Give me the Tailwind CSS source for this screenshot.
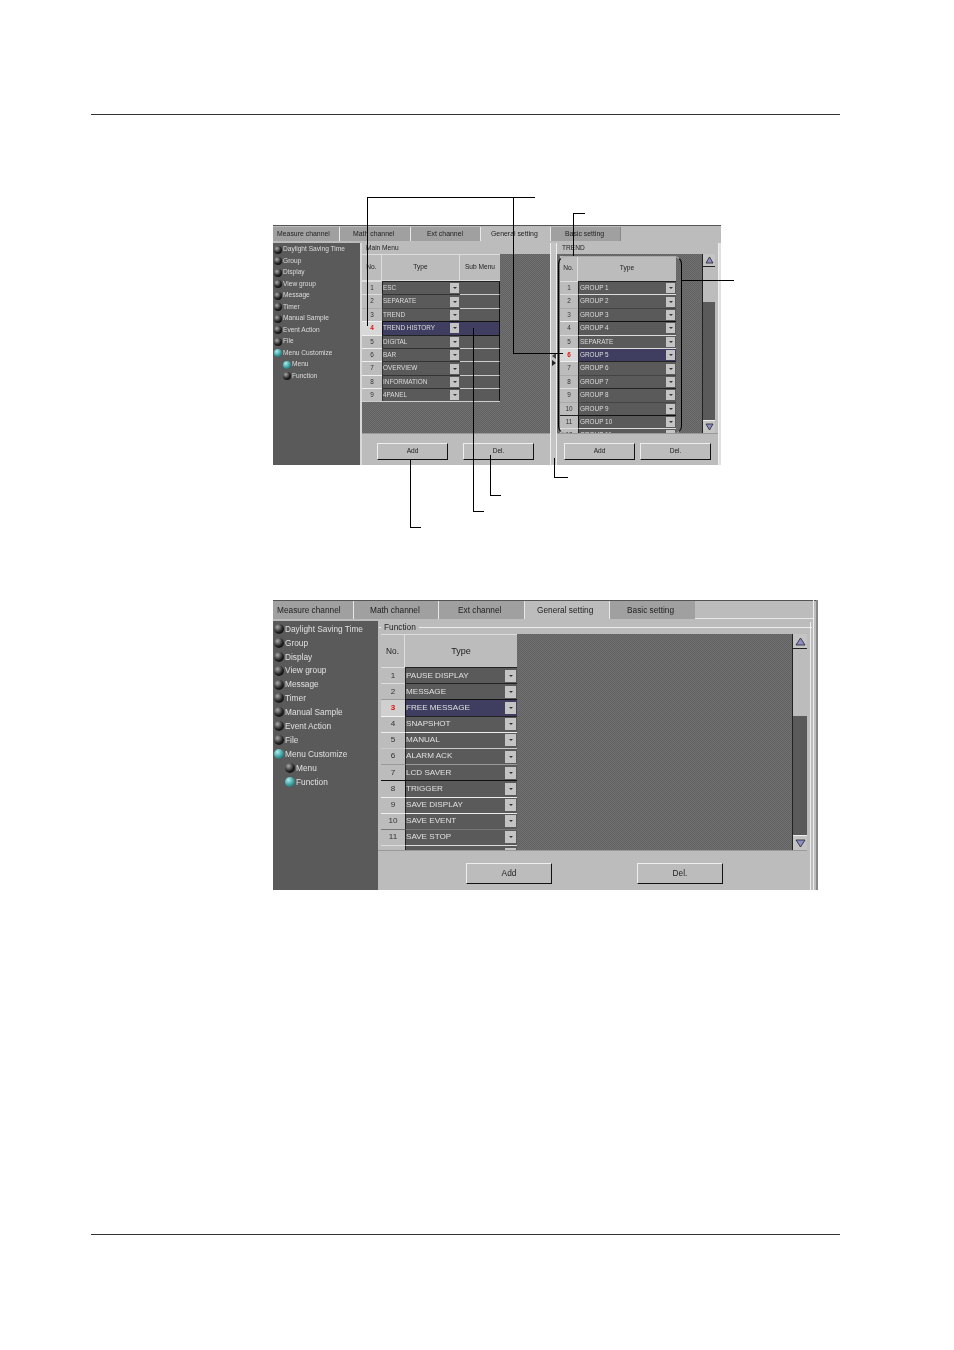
<!DOCTYPE html>
<html><head><meta charset="utf-8"><title>Menu Customize</title>
<script src="https://cdn.jsdelivr.net/npm/@tailwindcss/browser@4"></script>
</head>
<body class="bg-white">
<div class="relative w-[954px] h-[1350px] overflow-hidden bg-white font-['Liberation_Sans',Arial,sans-serif]">
  <div class="absolute left-[91px] top-[114px] w-[749px] h-px bg-[#333]"></div>
  <div class="absolute left-[91px] top-[1234px] w-[749px] h-px bg-[#333]"></div>

  <div class="pt-[225px] pl-[273px]">
    <!-- PANEL 1 -->
    <div class="w-[448px] h-[240px] flex flex-col bg-[#bcbcbc] border-t border-[#555] text-[6.6px] leading-none text-[#222] blur-[0.3px]">
      <div class="flex h-[15px] shrink-0 text-[6.9px] pt-px">
        <div class="w-[67px] bg-[#a0a0a0] border-r border-[#e8e8e8] flex items-center pl-[4px]">Measure channel</div>
        <div class="w-[71px] bg-[#a0a0a0] border-r border-[#e8e8e8] flex items-center pl-[13px]">Math channel</div>
        <div class="w-[70px] bg-[#a0a0a0] border-r border-[#e8e8e8] flex items-center pl-[16px]">Ext channel</div>
        <div class="w-[70px] bg-[#bcbcbc] border-r border-[#e8e8e8] flex items-center pl-[10px]">General setting</div>
        <div class="w-[70px] bg-[#a0a0a0] border-r border-[#888] flex items-center pl-[14px]">Basic setting</div>
      </div>
      <div class="flex flex-1 min-h-0 pt-[2px]">
        <div class="w-[87px] bg-[#5a5a5a] text-[#dcdcdc] flex flex-col pt-[1px] pl-[1px] shrink-0">
          <div class="flex items-center gap-[1px] h-[11.5px]"><span class="w-[8px] h-[8px] rounded-full bg-[radial-gradient(circle_at_35%_30%,#aaa,#222_55%,#000)]"></span>Daylight Saving Time</div>
          <div class="flex items-center gap-[1px] h-[11.5px]"><span class="w-[8px] h-[8px] rounded-full bg-[radial-gradient(circle_at_35%_30%,#aaa,#222_55%,#000)]"></span>Group</div>
          <div class="flex items-center gap-[1px] h-[11.5px]"><span class="w-[8px] h-[8px] rounded-full bg-[radial-gradient(circle_at_35%_30%,#aaa,#222_55%,#000)]"></span>Display</div>
          <div class="flex items-center gap-[1px] h-[11.5px]"><span class="w-[8px] h-[8px] rounded-full bg-[radial-gradient(circle_at_35%_30%,#aaa,#222_55%,#000)]"></span>View group</div>
          <div class="flex items-center gap-[1px] h-[11.5px]"><span class="w-[8px] h-[8px] rounded-full bg-[radial-gradient(circle_at_35%_30%,#aaa,#222_55%,#000)]"></span>Message</div>
          <div class="flex items-center gap-[1px] h-[11.5px]"><span class="w-[8px] h-[8px] rounded-full bg-[radial-gradient(circle_at_35%_30%,#aaa,#222_55%,#000)]"></span>Timer</div>
          <div class="flex items-center gap-[1px] h-[11.5px]"><span class="w-[8px] h-[8px] rounded-full bg-[radial-gradient(circle_at_35%_30%,#aaa,#222_55%,#000)]"></span>Manual Sample</div>
          <div class="flex items-center gap-[1px] h-[11.5px]"><span class="w-[8px] h-[8px] rounded-full bg-[radial-gradient(circle_at_35%_30%,#aaa,#222_55%,#000)]"></span>Event Action</div>
          <div class="flex items-center gap-[1px] h-[11.5px]"><span class="w-[8px] h-[8px] rounded-full bg-[radial-gradient(circle_at_35%_30%,#aaa,#222_55%,#000)]"></span>File</div>
          <div class="flex items-center gap-[1px] h-[11.5px]"><span class="w-[8px] h-[8px] rounded-full bg-[radial-gradient(circle_at_35%_30%,#aee,#3a9a9a_55%,#145)]"></span>Menu Customize</div>
          <div class="flex items-center gap-[1px] h-[11.5px] pl-[9px]"><span class="w-[8px] h-[8px] rounded-full bg-[radial-gradient(circle_at_35%_30%,#aee,#3a9a9a_55%,#145)]"></span>Menu</div>
          <div class="flex items-center gap-[1px] h-[11.5px] pl-[9px]"><span class="w-[8px] h-[8px] rounded-full bg-[radial-gradient(circle_at_35%_30%,#aaa,#222_55%,#000)]"></span>Function</div>
        </div>
        <div class="w-[2px] bg-[#d8d8d8] shrink-0"></div>
        <!-- left menu column -->
        <div class="w-[188px] flex flex-col shrink-0">
          <div class="h-[11px] pl-[4px] flex items-center">Main Menu</div>
          <div class="h-[179px] flex bg-[repeating-conic-gradient(#626262_0_25%,#707070_0_50%)] bg-[length:2px_2px] overflow-hidden">
            <div class="w-[138px] flex flex-col shrink-0 bg-[#bcbcbc]">
              <div class="flex h-[27px] shrink-0 border-y border-[#ddd]">
                <div class="w-[20px] flex items-center justify-center border-r border-[#ddd]">No.</div>
                <div class="w-[78px] flex items-center justify-center border-r border-[#ddd]">Type</div>
                <div class="w-[40px] flex items-center justify-center">Sub Menu</div>
              </div>
              <div class="flex h-[13.4px] text-[#ddd] text-[6.4px]"><div class="w-[20px] bg-[#bcbcbc] border-t border-[#ddd] text-[#333] flex items-center justify-center">1</div><div class="w-[78px] bg-[#5a5a5a] border-t border-l border-[#222] flex items-center justify-between">ESC<span class="w-[9px] h-[10px] mr-[1px] bg-[#c4c4c4] flex items-center justify-center"><span class="border-x-[2px] border-t-[2px] border-x-transparent border-t-[#333]"></span></span></div><div class="w-[40px] bg-[#5a5a5a] border-t border-t-[#222] border-r border-r-[#111]"></div></div>
              <div class="flex h-[13.4px] text-[#ddd] text-[6.4px]"><div class="w-[20px] bg-[#bcbcbc] border-t border-[#ddd] text-[#333] flex items-center justify-center">2</div><div class="w-[78px] bg-[#5a5a5a] border-t border-l border-[#333] flex items-center justify-between">SEPARATE<span class="w-[9px] h-[10px] mr-[1px] bg-[#c4c4c4] flex items-center justify-center"><span class="border-x-[2px] border-t-[2px] border-x-transparent border-t-[#333]"></span></span></div><div class="w-[40px] bg-[#5a5a5a] border-t border-t-[#ccc] border-r border-r-[#111]"></div></div>
              <div class="flex h-[13.4px] text-[#ddd] text-[6.4px]"><div class="w-[20px] bg-[#bcbcbc] border-t border-[#aaa] text-[#333] flex items-center justify-center">3</div><div class="w-[78px] bg-[#5a5a5a] border-t border-l border-[#444] flex items-center justify-between">TREND<span class="w-[9px] h-[10px] mr-[1px] bg-[#c4c4c4] flex items-center justify-center"><span class="border-x-[2px] border-t-[2px] border-x-transparent border-t-[#333]"></span></span></div><div class="w-[40px] bg-[#5a5a5a] border-t border-t-[#ccc] border-r border-r-[#111]"></div></div>
              <div class="flex h-[13.4px] text-[#ddd] text-[6.4px]"><div class="w-[20px] bg-[#d8d8d8] border-t border-[#eee] text-[#e01010] font-bold flex items-center justify-center">4</div><div class="w-[78px] bg-[#3f3e60] border-t border-l border-[#111] flex items-center justify-between">TREND HISTORY<span class="w-[9px] h-[10px] mr-[1px] bg-[#c4c4c4] flex items-center justify-center"><span class="border-x-[2px] border-t-[2px] border-x-transparent border-t-[#333]"></span></span></div><div class="w-[40px] bg-[#3f3e60] border-t border-t-[#111] border-r border-r-[#111]"></div></div>
              <div class="flex h-[13.4px] text-[#ddd] text-[6.4px]"><div class="w-[20px] bg-[#bcbcbc] border-t border-[#eee] text-[#333] flex items-center justify-center">5</div><div class="w-[78px] bg-[#5a5a5a] border-t border-l border-[#222] flex items-center justify-between">DIGITAL<span class="w-[9px] h-[10px] mr-[1px] bg-[#c4c4c4] flex items-center justify-center"><span class="border-x-[2px] border-t-[2px] border-x-transparent border-t-[#333]"></span></span></div><div class="w-[40px] bg-[#5a5a5a] border-t border-t-[#111] border-r border-r-[#111]"></div></div>
              <div class="flex h-[13.4px] text-[#ddd] text-[6.4px]"><div class="w-[20px] bg-[#bcbcbc] border-t border-[#eee] text-[#333] flex items-center justify-center">6</div><div class="w-[78px] bg-[#5a5a5a] border-t border-l border-[#333] flex items-center justify-between">BAR<span class="w-[9px] h-[10px] mr-[1px] bg-[#c4c4c4] flex items-center justify-center"><span class="border-x-[2px] border-t-[2px] border-x-transparent border-t-[#333]"></span></span></div><div class="w-[40px] bg-[#5a5a5a] border-t border-t-[#ccc] border-r border-r-[#111]"></div></div>
              <div class="flex h-[13.4px] text-[#ddd] text-[6.4px]"><div class="w-[20px] bg-[#bcbcbc] border-t border-[#eee] text-[#333] flex items-center justify-center">7</div><div class="w-[78px] bg-[#5a5a5a] border-t border-l border-[#333] flex items-center justify-between">OVERVIEW<span class="w-[9px] h-[10px] mr-[1px] bg-[#c4c4c4] flex items-center justify-center"><span class="border-x-[2px] border-t-[2px] border-x-transparent border-t-[#333]"></span></span></div><div class="w-[40px] bg-[#5a5a5a] border-t border-t-[#ccc] border-r border-r-[#111]"></div></div>
              <div class="flex h-[13.4px] text-[#ddd] text-[6.4px]"><div class="w-[20px] bg-[#bcbcbc] border-t border-[#eee] text-[#333] flex items-center justify-center">8</div><div class="w-[78px] bg-[#5a5a5a] border-t border-l border-[#333] flex items-center justify-between">INFORMATION<span class="w-[9px] h-[10px] mr-[1px] bg-[#c4c4c4] flex items-center justify-center"><span class="border-x-[2px] border-t-[2px] border-x-transparent border-t-[#333]"></span></span></div><div class="w-[40px] bg-[#5a5a5a] border-t border-t-[#ccc] border-r border-r-[#111]"></div></div>
              <div class="flex h-[14px] text-[#ddd] text-[6.4px] border-b border-[#ccc]"><div class="w-[20px] bg-[#bcbcbc] border-t border-[#eee] text-[#333] flex items-center justify-center">9</div><div class="w-[78px] bg-[#5a5a5a] border-t border-l border-[#333] flex items-center justify-between">4PANEL<span class="w-[9px] h-[10px] mr-[1px] bg-[#c4c4c4] flex items-center justify-center"><span class="border-x-[2px] border-t-[2px] border-x-transparent border-t-[#333]"></span></span></div><div class="w-[40px] bg-[#5a5a5a] border-t border-t-[#ccc] border-r border-r-[#111]"></div></div>
              <div class="flex-1 bg-[repeating-conic-gradient(#626262_0_25%,#707070_0_50%)] bg-[length:2px_2px]"></div>
            </div>
          </div>
          <div class="flex-1 border-t border-[#999] flex gap-[15px] pl-[15px] pt-[9px]">
            <div class="w-[71px] h-[17px] bg-[#bcbcbc] border border-t-[#eee] border-l-[#eee] border-r-[#111] border-b-[#111] flex items-center justify-center">Add</div>
            <div class="w-[71px] h-[17px] bg-[#bcbcbc] border border-t-[#eee] border-l-[#eee] border-r-[#111] border-b-[#111] flex items-center justify-center">Del.</div>
          </div>
        </div>
        <!-- divider -->
        <div class="w-[7px] shrink-0 bg-[#c4c4c4] border-x border-x-[#eee] relative">
          <span class="absolute left-[1px] top-[110px] border-y-[3px] border-r-[4px] border-y-transparent border-r-[#444]"></span>
          <span class="absolute left-[1px] top-[117px] border-y-[3px] border-l-[4px] border-y-transparent border-l-[#222]"></span>
        </div>
        <!-- right column -->
        <div class="w-[161px] flex flex-col shrink-0">
          <div class="h-[11px] pl-[5px] flex items-center">TREND</div>
          <div class="h-[179px] flex bg-[repeating-conic-gradient(#626262_0_25%,#707070_0_50%)] bg-[length:2px_2px] overflow-hidden">
            <div class="w-[145px] pl-[3px] pt-[2px] shrink-0">
              <div class="w-[116px] flex flex-col bg-[#bcbcbc] h-[177px] overflow-hidden">
                <div class="flex h-[25px] shrink-0">
                  <div class="w-[18px] flex items-center justify-center border-r border-[#ddd]">No.</div>
                  <div class="w-[98px] flex items-center justify-center">Type</div>
                </div>
                <div class="flex h-[13.4px] shrink-0 text-[#ddd] text-[6.4px]"><div class="w-[18px] bg-[#bcbcbc] border-t border-[#ddd] text-[#333] flex items-center justify-center">1</div><div class="w-[98px] bg-[#5a5a5a] border-t border-l border-[#222] flex items-center justify-between pl-px">GROUP 1<span class="w-[9px] h-[10px] mr-[1px] bg-[#c4c4c4] flex items-center justify-center"><span class="border-x-[2px] border-t-[2px] border-x-transparent border-t-[#333]"></span></span></div></div>
                <div class="flex h-[13.4px] shrink-0 text-[#ddd] text-[6.4px]"><div class="w-[18px] bg-[#bcbcbc] border-t border-[#ddd] text-[#333] flex items-center justify-center">2</div><div class="w-[98px] bg-[#5a5a5a] border-t border-l border-[#ddd] border-l-[#222] flex items-center justify-between pl-px">GROUP 2<span class="w-[9px] h-[10px] mr-[1px] bg-[#c4c4c4] flex items-center justify-center"><span class="border-x-[2px] border-t-[2px] border-x-transparent border-t-[#333]"></span></span></div></div>
                <div class="flex h-[13.4px] shrink-0 text-[#ddd] text-[6.4px]"><div class="w-[18px] bg-[#bcbcbc] border-t border-[#aaa] text-[#444] flex items-center justify-center">3</div><div class="w-[98px] bg-[#5a5a5a] border-t border-l border-[#444] border-l-[#222] flex items-center justify-between pl-px">GROUP 3<span class="w-[9px] h-[10px] mr-[1px] bg-[#c4c4c4] flex items-center justify-center"><span class="border-x-[2px] border-t-[2px] border-x-transparent border-t-[#333]"></span></span></div></div>
                <div class="flex h-[13.4px] shrink-0 text-[#ddd] text-[6.4px]"><div class="w-[18px] bg-[#bcbcbc] border-t border-[#eee] text-[#333] flex items-center justify-center">4</div><div class="w-[98px] bg-[#5a5a5a] border-t border-l border-[#111] flex items-center justify-between pl-px">GROUP 4<span class="w-[9px] h-[10px] mr-[1px] bg-[#c4c4c4] flex items-center justify-center"><span class="border-x-[2px] border-t-[2px] border-x-transparent border-t-[#333]"></span></span></div></div>
                <div class="flex h-[13.4px] shrink-0 text-[#ddd] text-[6.4px]"><div class="w-[18px] bg-[#bcbcbc] border-t border-[#ddd] text-[#333] flex items-center justify-center">5</div><div class="w-[98px] bg-[#5a5a5a] border-t border-l border-[#ddd] border-l-[#222] flex items-center justify-between pl-px">SEPARATE<span class="w-[9px] h-[10px] mr-[1px] bg-[#c4c4c4] flex items-center justify-center"><span class="border-x-[2px] border-t-[2px] border-x-transparent border-t-[#333]"></span></span></div></div>
                <div class="flex h-[13.4px] shrink-0 text-[#ddd] text-[6.4px]"><div class="w-[18px] bg-[#d8d8d8] border-t border-[#eee] text-[#e01010] font-bold flex items-center justify-center">6</div><div class="w-[98px] bg-[#3f3e60] border-t border-l border-[#ddd] border-l-[#222] flex items-center justify-between pl-px">GROUP 5<span class="w-[9px] h-[10px] mr-[1px] bg-[#c4c4c4] flex items-center justify-center"><span class="border-x-[2px] border-t-[2px] border-x-transparent border-t-[#333]"></span></span></div></div>
                <div class="flex h-[13.4px] shrink-0 text-[#ddd] text-[6.4px]"><div class="w-[18px] bg-[#bcbcbc] border-t border-[#eee] text-[#333] flex items-center justify-center">7</div><div class="w-[98px] bg-[#5a5a5a] border-t border-l border-[#222] flex items-center justify-between pl-px">GROUP 6<span class="w-[9px] h-[10px] mr-[1px] bg-[#c4c4c4] flex items-center justify-center"><span class="border-x-[2px] border-t-[2px] border-x-transparent border-t-[#333]"></span></span></div></div>
                <div class="flex h-[13.4px] shrink-0 text-[#ddd] text-[6.4px]"><div class="w-[18px] bg-[#bcbcbc] border-t border-[#aaa] text-[#333] flex items-center justify-center">8</div><div class="w-[98px] bg-[#5a5a5a] border-t border-l border-[#444] border-l-[#222] flex items-center justify-between pl-px">GROUP 7<span class="w-[9px] h-[10px] mr-[1px] bg-[#c4c4c4] flex items-center justify-center"><span class="border-x-[2px] border-t-[2px] border-x-transparent border-t-[#333]"></span></span></div></div>
                <div class="flex h-[13.4px] shrink-0 text-[#ddd] text-[6.4px]"><div class="w-[18px] bg-[#bcbcbc] border-t border-[#ddd] text-[#333] flex items-center justify-center">9</div><div class="w-[98px] bg-[#5a5a5a] border-t border-l border-[#222] flex items-center justify-between pl-px">GROUP 8<span class="w-[9px] h-[10px] mr-[1px] bg-[#c4c4c4] flex items-center justify-center"><span class="border-x-[2px] border-t-[2px] border-x-transparent border-t-[#333]"></span></span></div></div>
                <div class="flex h-[13.4px] shrink-0 text-[#ddd] text-[6.4px]"><div class="w-[18px] bg-[#bcbcbc] border-t border-[#aaa] text-[#333] flex items-center justify-center">10</div><div class="w-[98px] bg-[#5a5a5a] border-t border-l border-[#444] border-l-[#222] flex items-center justify-between pl-px">GROUP 9<span class="w-[9px] h-[10px] mr-[1px] bg-[#c4c4c4] flex items-center justify-center"><span class="border-x-[2px] border-t-[2px] border-x-transparent border-t-[#333]"></span></span></div></div>
                <div class="flex h-[13.4px] shrink-0 text-[#ddd] text-[6.4px]"><div class="w-[18px] bg-[#bcbcbc] border-t border-[#222] text-[#333] flex items-center justify-center">11</div><div class="w-[98px] bg-[#5a5a5a] border-t border-l border-[#111] flex items-center justify-between pl-px">GROUP 10<span class="w-[9px] h-[10px] mr-[1px] bg-[#c4c4c4] flex items-center justify-center"><span class="border-x-[2px] border-t-[2px] border-x-transparent border-t-[#333]"></span></span></div></div>
                <div class="flex h-[13.4px] shrink-0 text-[#ddd] text-[6.4px]"><div class="w-[18px] bg-[#bcbcbc] border-t border-[#ddd] text-[#333] flex items-center justify-center">12</div><div class="w-[98px] bg-[#5a5a5a] border-t border-l border-[#ddd] border-l-[#222] flex items-center justify-between pl-px">GROUP 11<span class="w-[9px] h-[10px] mr-[1px] bg-[#c4c4c4] flex items-center justify-center"><span class="border-x-[2px] border-t-[2px] border-x-transparent border-t-[#333]"></span></span></div></div>
              </div>
            </div>
            <div class="w-[13px] flex flex-col shrink-0 bg-[#5a5a5a] border-l border-[#222]">
              <div class="h-[13px] bg-[#c4c4c4] border-b border-[#222] flex items-center justify-center"><svg width="9" height="8" viewBox="0 0 9 8"><path d="M4.5 1 L8 7 H1Z" fill="#8d8dc8" stroke="#222" stroke-width="0.8"/></svg></div>
              <div class="h-[35px] bg-[#bcbcbc]"></div>
              <div class="flex-1"></div>
              <div class="h-[13px] bg-[#c4c4c4] border-t border-[#eee] flex items-center justify-center"><svg width="9" height="8" viewBox="0 0 9 8"><path d="M4.5 7 L8 1 H1Z" fill="#8d8dc8" stroke="#222" stroke-width="0.8"/></svg></div>
            </div>
            <div class="flex-1 bg-[#bcbcbc]"></div>
          </div>
          <div class="flex-1 border-t border-[#999] flex gap-[5px] pl-[7px] pt-[9px]">
            <div class="w-[71px] h-[17px] bg-[#bcbcbc] border border-t-[#eee] border-l-[#eee] border-r-[#111] border-b-[#111] flex items-center justify-center">Add</div>
            <div class="w-[71px] h-[17px] bg-[#bcbcbc] border border-t-[#eee] border-l-[#eee] border-r-[#111] border-b-[#111] flex items-center justify-center">Del.</div>
          </div>
        </div>
        <div class="flex-1 border-l border-[#eee] border-r-2 border-r-[#e0e0e0]"></div>
      </div>
    </div>

    <!-- PANEL 2 -->
    <div class="mt-[135px] w-[545px] h-[290px] flex flex-col bg-[#bcbcbc] border-t border-[#555] text-[8.3px] leading-none text-[#222] blur-[0.3px]">
      <div class="flex h-[18px] shrink-0">
        <div class="w-[81px] bg-[#a0a0a0] border-r border-[#e8e8e8] flex items-center pl-[4px]">Measure channel</div>
        <div class="w-[85px] bg-[#a0a0a0] border-r border-[#e8e8e8] flex items-center pl-[16px]">Math channel</div>
        <div class="w-[86px] bg-[#a0a0a0] border-r border-[#e8e8e8] flex items-center pl-[19px]">Ext channel</div>
        <div class="w-[85px] bg-[#bcbcbc] border-r border-[#e8e8e8] flex items-center pl-[12px]">General setting</div>
        <div class="w-[85px] bg-[#a0a0a0] flex items-center pl-[17px]">Basic setting</div>
        <div class="flex-1 border-b border-[#e8e8e8] mr-[5px]"></div>
      </div>
      <div class="flex flex-1 min-h-0 pt-[2px]">
        <div class="w-[105px] bg-[#5a5a5a] text-[#e0e0e0] flex flex-col pt-[1px] pl-[1px] shrink-0">
          <div class="flex items-center gap-[1px] h-[13.9px]"><span class="w-[10px] h-[10px] rounded-full bg-[radial-gradient(circle_at_35%_30%,#aaa,#222_55%,#000)]"></span>Daylight Saving Time</div>
          <div class="flex items-center gap-[1px] h-[13.9px]"><span class="w-[10px] h-[10px] rounded-full bg-[radial-gradient(circle_at_35%_30%,#aaa,#222_55%,#000)]"></span>Group</div>
          <div class="flex items-center gap-[1px] h-[13.9px]"><span class="w-[10px] h-[10px] rounded-full bg-[radial-gradient(circle_at_35%_30%,#aaa,#222_55%,#000)]"></span>Display</div>
          <div class="flex items-center gap-[1px] h-[13.9px]"><span class="w-[10px] h-[10px] rounded-full bg-[radial-gradient(circle_at_35%_30%,#aaa,#222_55%,#000)]"></span>View group</div>
          <div class="flex items-center gap-[1px] h-[13.9px]"><span class="w-[10px] h-[10px] rounded-full bg-[radial-gradient(circle_at_35%_30%,#aaa,#222_55%,#000)]"></span>Message</div>
          <div class="flex items-center gap-[1px] h-[13.9px]"><span class="w-[10px] h-[10px] rounded-full bg-[radial-gradient(circle_at_35%_30%,#aaa,#222_55%,#000)]"></span>Timer</div>
          <div class="flex items-center gap-[1px] h-[13.9px]"><span class="w-[10px] h-[10px] rounded-full bg-[radial-gradient(circle_at_35%_30%,#aaa,#222_55%,#000)]"></span>Manual Sample</div>
          <div class="flex items-center gap-[1px] h-[13.9px]"><span class="w-[10px] h-[10px] rounded-full bg-[radial-gradient(circle_at_35%_30%,#aaa,#222_55%,#000)]"></span>Event Action</div>
          <div class="flex items-center gap-[1px] h-[13.9px]"><span class="w-[10px] h-[10px] rounded-full bg-[radial-gradient(circle_at_35%_30%,#aaa,#222_55%,#000)]"></span>File</div>
          <div class="flex items-center gap-[1px] h-[13.9px]"><span class="w-[10px] h-[10px] rounded-full bg-[radial-gradient(circle_at_35%_30%,#aee,#3a9a9a_55%,#145)]"></span>Menu Customize</div>
          <div class="flex items-center gap-[1px] h-[13.9px] pl-[11px]"><span class="w-[10px] h-[10px] rounded-full bg-[radial-gradient(circle_at_35%_30%,#aaa,#222_55%,#000)]"></span>Menu</div>
          <div class="flex items-center gap-[1px] h-[13.9px] pl-[11px]"><span class="w-[10px] h-[10px] rounded-full bg-[radial-gradient(circle_at_35%_30%,#aee,#3a9a9a_55%,#145)]"></span>Function</div>
        </div>
        <div class="flex-1 flex flex-col min-w-0">
          <div class="h-[13px] flex items-center pl-[1px] mr-[6px] gap-[3px]">
            <span class="w-[2px] h-px bg-[#eee]"></span><span>Function</span><span class="flex-1 h-px bg-[#eee]"></span>
          </div>
          <div class="h-[216px] ml-[3px] mr-[11px] flex bg-[repeating-conic-gradient(#626262_0_25%,#707070_0_50%)] bg-[length:2px_2px] overflow-hidden">
            <div class="w-[136px] h-full flex flex-col shrink-0 bg-[#bcbcbc] overflow-hidden">
              <div class="flex h-[33px] shrink-0 border-t border-[#ddd]">
                <div class="w-[24px] flex items-center justify-center border-r border-[#ddd]">No.</div>
                <div class="w-[112px] flex items-center justify-center text-[9px]">Type</div>
              </div>
              <div class="flex h-[16.2px] shrink-0 text-[#e0e0e0] text-[8.1px]"><div class="w-[24px] bg-[#bcbcbc] border-t border-[#ddd] text-[#333] flex items-center justify-center">1</div><div class="w-[112px] bg-[#5a5a5a] border-t border-l border-[#222] flex items-center justify-between">PAUSE DISPLAY<span class="w-[11px] h-[12px] mr-[1px] bg-[#c4c4c4] flex items-center justify-center"><span class="border-x-[2px] border-t-[2px] border-x-transparent border-t-[#333]"></span></span></div></div>
              <div class="flex h-[16.2px] shrink-0 text-[#e0e0e0] text-[8.1px]"><div class="w-[24px] bg-[#bcbcbc] border-t border-[#ddd] text-[#333] flex items-center justify-center">2</div><div class="w-[112px] bg-[#5a5a5a] border-t border-l border-[#222] flex items-center justify-between">MESSAGE<span class="w-[11px] h-[12px] mr-[1px] bg-[#c4c4c4] flex items-center justify-center"><span class="border-x-[2px] border-t-[2px] border-x-transparent border-t-[#333]"></span></span></div></div>
              <div class="flex h-[16.2px] shrink-0 text-[#e0e0e0] text-[8.1px]"><div class="w-[24px] bg-[#d0d0d0] border-t border-[#999] text-[#e01010] font-bold flex items-center justify-center">3</div><div class="w-[112px] bg-[#3f3e60] border-t border-l border-[#111] flex items-center justify-between">FREE MESSAGE<span class="w-[11px] h-[12px] mr-[1px] bg-[#c4c4c4] flex items-center justify-center"><span class="border-x-[2px] border-t-[2px] border-x-transparent border-t-[#333]"></span></span></div></div>
              <div class="flex h-[16.2px] shrink-0 text-[#e0e0e0] text-[8.1px]"><div class="w-[24px] bg-[#bcbcbc] border-t border-[#f4f4f4] text-[#333] flex items-center justify-center">4</div><div class="w-[112px] bg-[#5a5a5a] border-t border-l border-[#222] flex items-center justify-between">SNAPSHOT<span class="w-[11px] h-[12px] mr-[1px] bg-[#c4c4c4] flex items-center justify-center"><span class="border-x-[2px] border-t-[2px] border-x-transparent border-t-[#333]"></span></span></div></div>
              <div class="flex h-[16.2px] shrink-0 text-[#e0e0e0] text-[8.1px]"><div class="w-[24px] bg-[#bcbcbc] border-t border-[#eee] text-[#333] flex items-center justify-center">5</div><div class="w-[112px] bg-[#5a5a5a] border-t border-l border-[#eee] border-l-[#222] flex items-center justify-between">MANUAL<span class="w-[11px] h-[12px] mr-[1px] bg-[#c4c4c4] flex items-center justify-center"><span class="border-x-[2px] border-t-[2px] border-x-transparent border-t-[#333]"></span></span></div></div>
              <div class="flex h-[16.2px] shrink-0 text-[#e0e0e0] text-[8.1px]"><div class="w-[24px] bg-[#bcbcbc] border-t border-[#ccc] text-[#333] flex items-center justify-center">6</div><div class="w-[112px] bg-[#5a5a5a] border-t border-l border-[#ccc] border-l-[#222] flex items-center justify-between">ALARM ACK<span class="w-[11px] h-[12px] mr-[1px] bg-[#c4c4c4] flex items-center justify-center"><span class="border-x-[2px] border-t-[2px] border-x-transparent border-t-[#333]"></span></span></div></div>
              <div class="flex h-[16.2px] shrink-0 text-[#e0e0e0] text-[8.1px]"><div class="w-[24px] bg-[#bcbcbc] border-t border-[#999] text-[#333] flex items-center justify-center">7</div><div class="w-[112px] bg-[#5a5a5a] border-t border-l border-[#999] border-l-[#222] flex items-center justify-between">LCD SAVER<span class="w-[11px] h-[12px] mr-[1px] bg-[#c4c4c4] flex items-center justify-center"><span class="border-x-[2px] border-t-[2px] border-x-transparent border-t-[#333]"></span></span></div></div>
              <div class="flex h-[16.2px] shrink-0 text-[#e0e0e0] text-[8.1px]"><div class="w-[24px] bg-[#bcbcbc] border-t border-[#111] text-[#333] flex items-center justify-center">8</div><div class="w-[112px] bg-[#5a5a5a] border-t border-l border-[#111] flex items-center justify-between">TRIGGER<span class="w-[11px] h-[12px] mr-[1px] bg-[#c4c4c4] flex items-center justify-center"><span class="border-x-[2px] border-t-[2px] border-x-transparent border-t-[#333]"></span></span></div></div>
              <div class="flex h-[16.2px] shrink-0 text-[#e0e0e0] text-[8.1px]"><div class="w-[24px] bg-[#bcbcbc] border-t border-[#eee] text-[#333] flex items-center justify-center">9</div><div class="w-[112px] bg-[#5a5a5a] border-t border-l border-[#eee] border-l-[#222] flex items-center justify-between">SAVE DISPLAY<span class="w-[11px] h-[12px] mr-[1px] bg-[#c4c4c4] flex items-center justify-center"><span class="border-x-[2px] border-t-[2px] border-x-transparent border-t-[#333]"></span></span></div></div>
              <div class="flex h-[16.2px] shrink-0 text-[#e0e0e0] text-[8.1px]"><div class="w-[24px] bg-[#bcbcbc] border-t border-[#eee] text-[#333] flex items-center justify-center">10</div><div class="w-[112px] bg-[#5a5a5a] border-t border-l border-[#eee] border-l-[#222] flex items-center justify-between">SAVE EVENT<span class="w-[11px] h-[12px] mr-[1px] bg-[#c4c4c4] flex items-center justify-center"><span class="border-x-[2px] border-t-[2px] border-x-transparent border-t-[#333]"></span></span></div></div>
              <div class="flex h-[16.2px] shrink-0 text-[#e0e0e0] text-[8.1px]"><div class="w-[24px] bg-[#bcbcbc] border-t border-[#777] text-[#333] flex items-center justify-center">11</div><div class="w-[112px] bg-[#5a5a5a] border-t border-l border-[#777] border-l-[#222] flex items-center justify-between">SAVE STOP<span class="w-[11px] h-[12px] mr-[1px] bg-[#c4c4c4] flex items-center justify-center"><span class="border-x-[2px] border-t-[2px] border-x-transparent border-t-[#333]"></span></span></div></div>
              <div class="flex h-[16.2px] shrink-0 text-[#e0e0e0] text-[8.1px]"><div class="w-[24px] bg-[#bcbcbc] border-t border-[#ddd] text-[#333] flex items-center justify-center">12</div><div class="w-[112px] bg-[#5a5a5a] border-t border-l border-[#ddd] border-l-[#222] flex items-center justify-between">MATH<span class="w-[11px] h-[12px] mr-[1px] bg-[#c4c4c4] flex items-center justify-center"><span class="border-x-[2px] border-t-[2px] border-x-transparent border-t-[#333]"></span></span></div></div>
            </div>
            <div class="flex-1"></div>
            <div class="w-[15px] flex flex-col shrink-0 bg-[#5a5a5a] border-l border-[#222]">
              <div class="h-[15px] bg-[#c4c4c4] border-b border-[#222] flex items-center justify-center"><svg width="11" height="9" viewBox="0 0 11 9"><path d="M5.5 1 L10 8 H1Z" fill="#8d8dc8" stroke="#222" stroke-width="0.8"/></svg></div>
              <div class="h-[67px] bg-[#bcbcbc]"></div>
              <div class="flex-1"></div>
              <div class="h-[15px] bg-[#c4c4c4] border-t border-[#eee] flex items-center justify-center"><svg width="11" height="9" viewBox="0 0 11 9"><path d="M5.5 8 L10 1 H1Z" fill="#8d8dc8" stroke="#222" stroke-width="0.8"/></svg></div>
            </div>
          </div>
          <div class="flex-1 flex gap-[85px] pl-[88px] pt-[12px] mr-[11px] border-t border-[#999]">
            <div class="w-[86px] h-[21px] shrink-0 bg-[#bcbcbc] border border-t-[#eee] border-l-[#eee] border-r-[#111] border-b-[#111] flex items-center justify-center">Add</div>
            <div class="w-[86px] h-[21px] shrink-0 bg-[#bcbcbc] border border-t-[#eee] border-l-[#eee] border-r-[#111] border-b-[#111] flex items-center justify-center">Del.</div>
          </div>
        </div>
      </div>
    </div>
  </div>

  <!-- frame strips at right of panel 2 -->
  <div class="absolute left-[810px] top-[622px] w-px h-[268px] bg-[#eee]"></div>
  <div class="absolute left-[813px] top-[600px] w-px h-[290px] bg-[#eee]"></div>
  <div class="absolute left-[816px] top-[600px] w-[2px] h-[290px] bg-[#888]"></div>

  <!-- callouts -->
  <div class="absolute left-[367px] top-[197px] w-[168px] h-px bg-black"></div>
  <div class="absolute left-[367px] top-[197px] w-px h-[129px] bg-black"></div>
  <div class="absolute left-[513px] top-[197px] w-px h-[157px] bg-black"></div>
  <div class="absolute left-[513px] top-[353px] w-[50px] h-px bg-black"></div>
  <div class="absolute left-[573px] top-[213px] w-[12px] h-px bg-black"></div>
  <div class="absolute left-[573px] top-[213px] w-px h-[43px] bg-black"></div>
  <div class="absolute left-[558px] top-[256px] w-[124px] h-[178px] rounded-[8px] border border-black border-t-[#aaa] border-b-[#999]"></div>
  <div class="absolute left-[682px] top-[280px] w-[52px] h-px bg-black"></div>
  <div class="absolute left-[473px] top-[328px] w-px h-[183px] bg-black"></div>
  <div class="absolute left-[473px] top-[511px] w-[11px] h-px bg-black"></div>
  <div class="absolute left-[490px] top-[455px] w-px h-[40px] bg-black"></div>
  <div class="absolute left-[490px] top-[495px] w-[11px] h-px bg-black"></div>
  <div class="absolute left-[410px] top-[460px] w-px h-[67px] bg-black"></div>
  <div class="absolute left-[410px] top-[527px] w-[11px] h-px bg-black"></div>
  <div class="absolute left-[554px] top-[458px] w-px h-[19px] bg-black"></div>
  <div class="absolute left-[554px] top-[477px] w-[14px] h-px bg-black"></div>
</div>
</body></html>
